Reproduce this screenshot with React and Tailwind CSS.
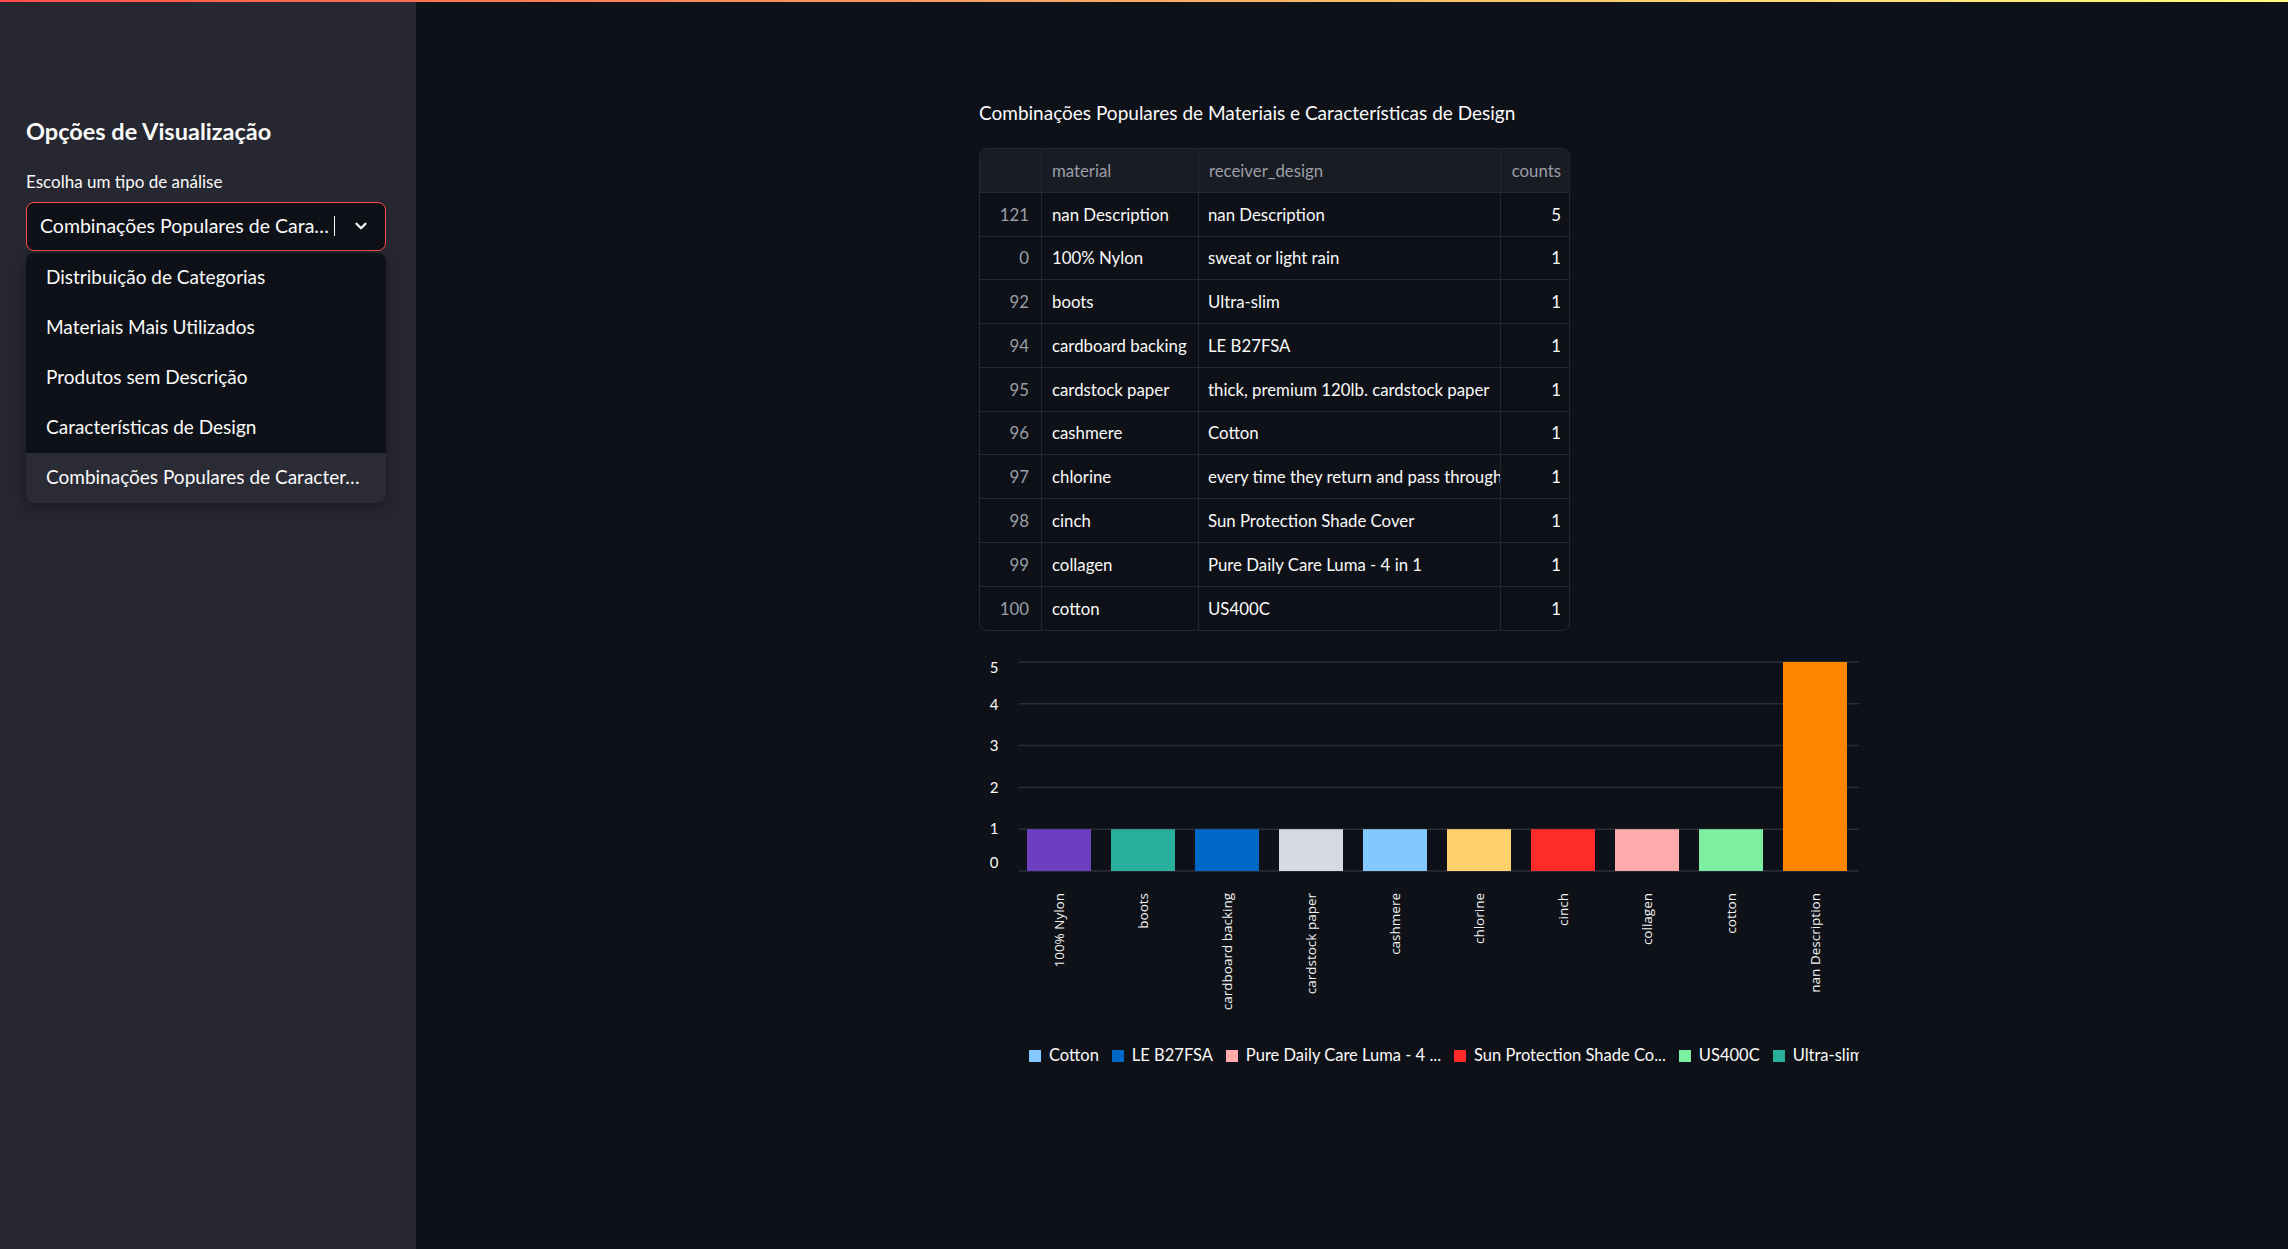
import React from 'react';
import { ChevronDown } from 'lucide-react';

const FONT = { fontFamily: '"Source Sans Pro", Lato, "Noto Sans", sans-serif' };

const opcoes = [
  'Distribuição de Categorias',
  'Materiais Mais Utilizados',
  'Produtos sem Descrição',
  'Características de Design',
  'Combinações Populares de Caracter…',
];

const linhas = [
  { idx: 121, material: 'nan Description', design: 'nan Description', counts: 5 },
  { idx: 0, material: '100% Nylon', design: 'sweat or light rain', counts: 1 },
  { idx: 92, material: 'boots', design: 'Ultra-slim', counts: 1 },
  { idx: 94, material: 'cardboard backing', design: 'LE B27FSA', counts: 1 },
  { idx: 95, material: 'cardstock paper', design: 'thick, premium 120lb. cardstock paper', counts: 1 },
  { idx: 96, material: 'cashmere', design: 'Cotton', counts: 1 },
  { idx: 97, material: 'chlorine', design: 'every time they return and pass through', counts: 1 },
  { idx: 98, material: 'cinch', design: 'Sun Protection Shade Cover', counts: 1 },
  { idx: 99, material: 'collagen', design: 'Pure Daily Care Luma - 4 in 1', counts: 1 },
  { idx: 100, material: 'cotton', design: 'US400C', counts: 1 },
];

const barras = [
  { label: '100% Nylon', value: 1, color: '#6d3fc0' },
  { label: 'boots', value: 1, color: '#29b09d' },
  { label: 'cardboard backing', value: 1, color: '#0068c9' },
  { label: 'cardstock paper', value: 1, color: '#d5dae5' },
  { label: 'cashmere', value: 1, color: '#83c9ff' },
  { label: 'chlorine', value: 1, color: '#ffd16a' },
  { label: 'cinch', value: 1, color: '#ff2b2b' },
  { label: 'collagen', value: 1, color: '#ffabab' },
  { label: 'cotton', value: 1, color: '#7defa1' },
  { label: 'nan Description', value: 5, color: '#ff8700' },
];

const legenda = [
  { label: 'Cotton', color: '#83c9ff' },
  { label: 'LE B27FSA', color: '#0068c9' },
  { label: 'Pure Daily Care Luma - 4 ...', color: '#ffabab' },
  { label: 'Sun Protection Shade Co...', color: '#ff2b2b' },
  { label: 'US400C', color: '#7defa1' },
  { label: 'Ultra-slim', color: '#29b09d' },
];

// eixo y: valor -> coordenada no svg
const yDe = (v) => 232 - 41.8 * v;
const ticks = [
  { v: 5, y: 29 },
  { v: 4, y: 66 },
  { v: 3, y: 107 },
  { v: 2, y: 149 },
  { v: 1, y: 190 },
  { v: 0, y: 224 },
];

const Grafico = () => (
  <div className="mt-[8px] w-[880px]">
    <svg width="880" height="380" className="block">
      {[0, 1, 2, 3, 4, 5].map((v) => (
        <line key={v} x1="40" x2="880" y1={yDe(v)} y2={yDe(v)} stroke="#2c2f38" strokeWidth="1.5" />
      ))}
      {ticks.map((t) => (
        <text key={t.v} x="15" y={t.y} dy="0.35em" textAnchor="middle" fill="#fafafa" fontSize="15" style={FONT}>
          {t.v}
        </text>
      ))}
      {barras.map((b, i) => {
        const x = 48 + i * 84;
        return (
          <g key={b.label}>
            <rect x={x} y={yDe(b.value)} width="64" height={41.8 * b.value} fill={b.color} />
            <text
              transform={`translate(${x + 32},254) rotate(-90)`}
              textAnchor="end"
              dy="0.35em"
              fill="#f2f2f2"
              fontSize="13.5"
              style={{ fontFamily: '"Open Sans", sans-serif' }}
            >
              {b.label}
            </text>
          </g>
        );
      })}
    </svg>
    <div className="w-[880px] overflow-hidden whitespace-nowrap flex items-center pl-[50px] mt-[24px] text-[16.5px] text-[#fafafa]" style={FONT}>
      {legenda.map((l) => (
        <div key={l.label} className="flex items-center shrink-0 mr-[13px]">
          <span className="w-[12px] h-[12px] mr-[8px] shrink-0" style={{ backgroundColor: l.color }} />
          <span>{l.label}</span>
        </div>
      ))}
    </div>
  </div>
);

const Tabela = () => {
  const cols = 'grid grid-cols-[62px_157px_302px_70px]';
  return (
    <div className="mt-[23px] w-[591px] border border-[#262830] rounded-lg overflow-hidden bg-[#0e1117] text-[16.8px]" style={FONT}>
      <div className={`${cols} h-[44px] bg-[#1a1c24] text-[#9b9ea8] border-b border-[#262830]`}>
        <div className="border-r border-[#262830]" />
        <div className="flex items-center px-[10px] border-r border-[#262830]">material</div>
        <div className="flex items-center px-[10px] border-r border-[#262830]">receiver_design</div>
        <div className="flex items-center justify-end pr-[10px]">counts</div>
      </div>
      {linhas.map((l, i) => (
        <div key={l.idx} className={`${cols} h-[43.75px] text-[#fafafa] ${i < linhas.length - 1 ? 'border-b border-[#262830]' : ''}`}>
          <div className="flex items-center justify-end pr-[12px] text-[#9b9ea8] border-r border-[#262830]">{l.idx}</div>
          <div className="flex items-center px-[10px] border-r border-[#262830] overflow-hidden whitespace-nowrap">{l.material}</div>
          <div className="flex items-center pl-[9px] border-r border-[#262830] overflow-hidden whitespace-nowrap">{l.design}</div>
          <div className="flex items-center justify-end pr-[10px]">{l.counts}</div>
        </div>
      ))}
    </div>
  );
};

const App = () => {
  return (
    <div className="relative w-full h-[1249px] flex bg-[#0e1117] overflow-hidden" style={FONT}>
      {/* faixa decorativa do topo */}
      <div className="absolute top-0 left-0 right-0 h-[2px] bg-gradient-to-r from-[#ff4b4b] to-[#fffd80] z-10" />

      {/* BARRA LATERAL */}
      <aside className="w-[416px] h-full bg-[#262730] shrink-0 px-[26px] pt-[117px]">
        <h3 className="text-[23.5px] leading-[1.2] font-bold text-[#fafafa]">Opções de Visualização</h3>
        <p className="mt-[27px] text-[17px] leading-[1.2] text-[#fafafa]">Escolha um tipo de análise</p>

        <div className="relative mt-[9px] w-[360px]">
          <div className="h-[49px] rounded-lg border border-[#ff4b4b] bg-[#0e1117] flex items-center pl-[13px] pr-[15px]">
            <span className="text-[19.5px] text-[#fafafa] whitespace-nowrap">Combinações Populares de Cara…</span>
            <span className="ml-[5px] w-px h-[20px] bg-[#fafafa]" />
            <ChevronDown className="ml-auto text-[#fafafa]" size={18} strokeWidth={3} />
          </div>

          {/* menu aberto */}
          <div className="absolute top-[51px] left-0 w-[360px] rounded-lg bg-[#0e1117] overflow-hidden shadow-[0_4px_16px_rgba(0,0,0,0.35)]">
            {opcoes.map((o, i) => (
              <div
                key={o}
                className={`h-[50px] flex items-center pl-[20px] text-[19px] text-[#fafafa] whitespace-nowrap ${i === opcoes.length - 1 ? 'bg-[#2a2b34]' : ''}`}
              >
                {o}
              </div>
            ))}
          </div>
        </div>
      </aside>

      {/* CONTEÚDO PRINCIPAL */}
      <main className="flex-1 pl-[563px] pt-[102px]">
        <h2 className="text-[19px] leading-[1.2] text-[#fafafa] whitespace-nowrap">
          Combinações Populares de Materiais e Características de Design
        </h2>
        <Tabela />
        <Grafico />
      </main>
    </div>
  );
};

export default App;
